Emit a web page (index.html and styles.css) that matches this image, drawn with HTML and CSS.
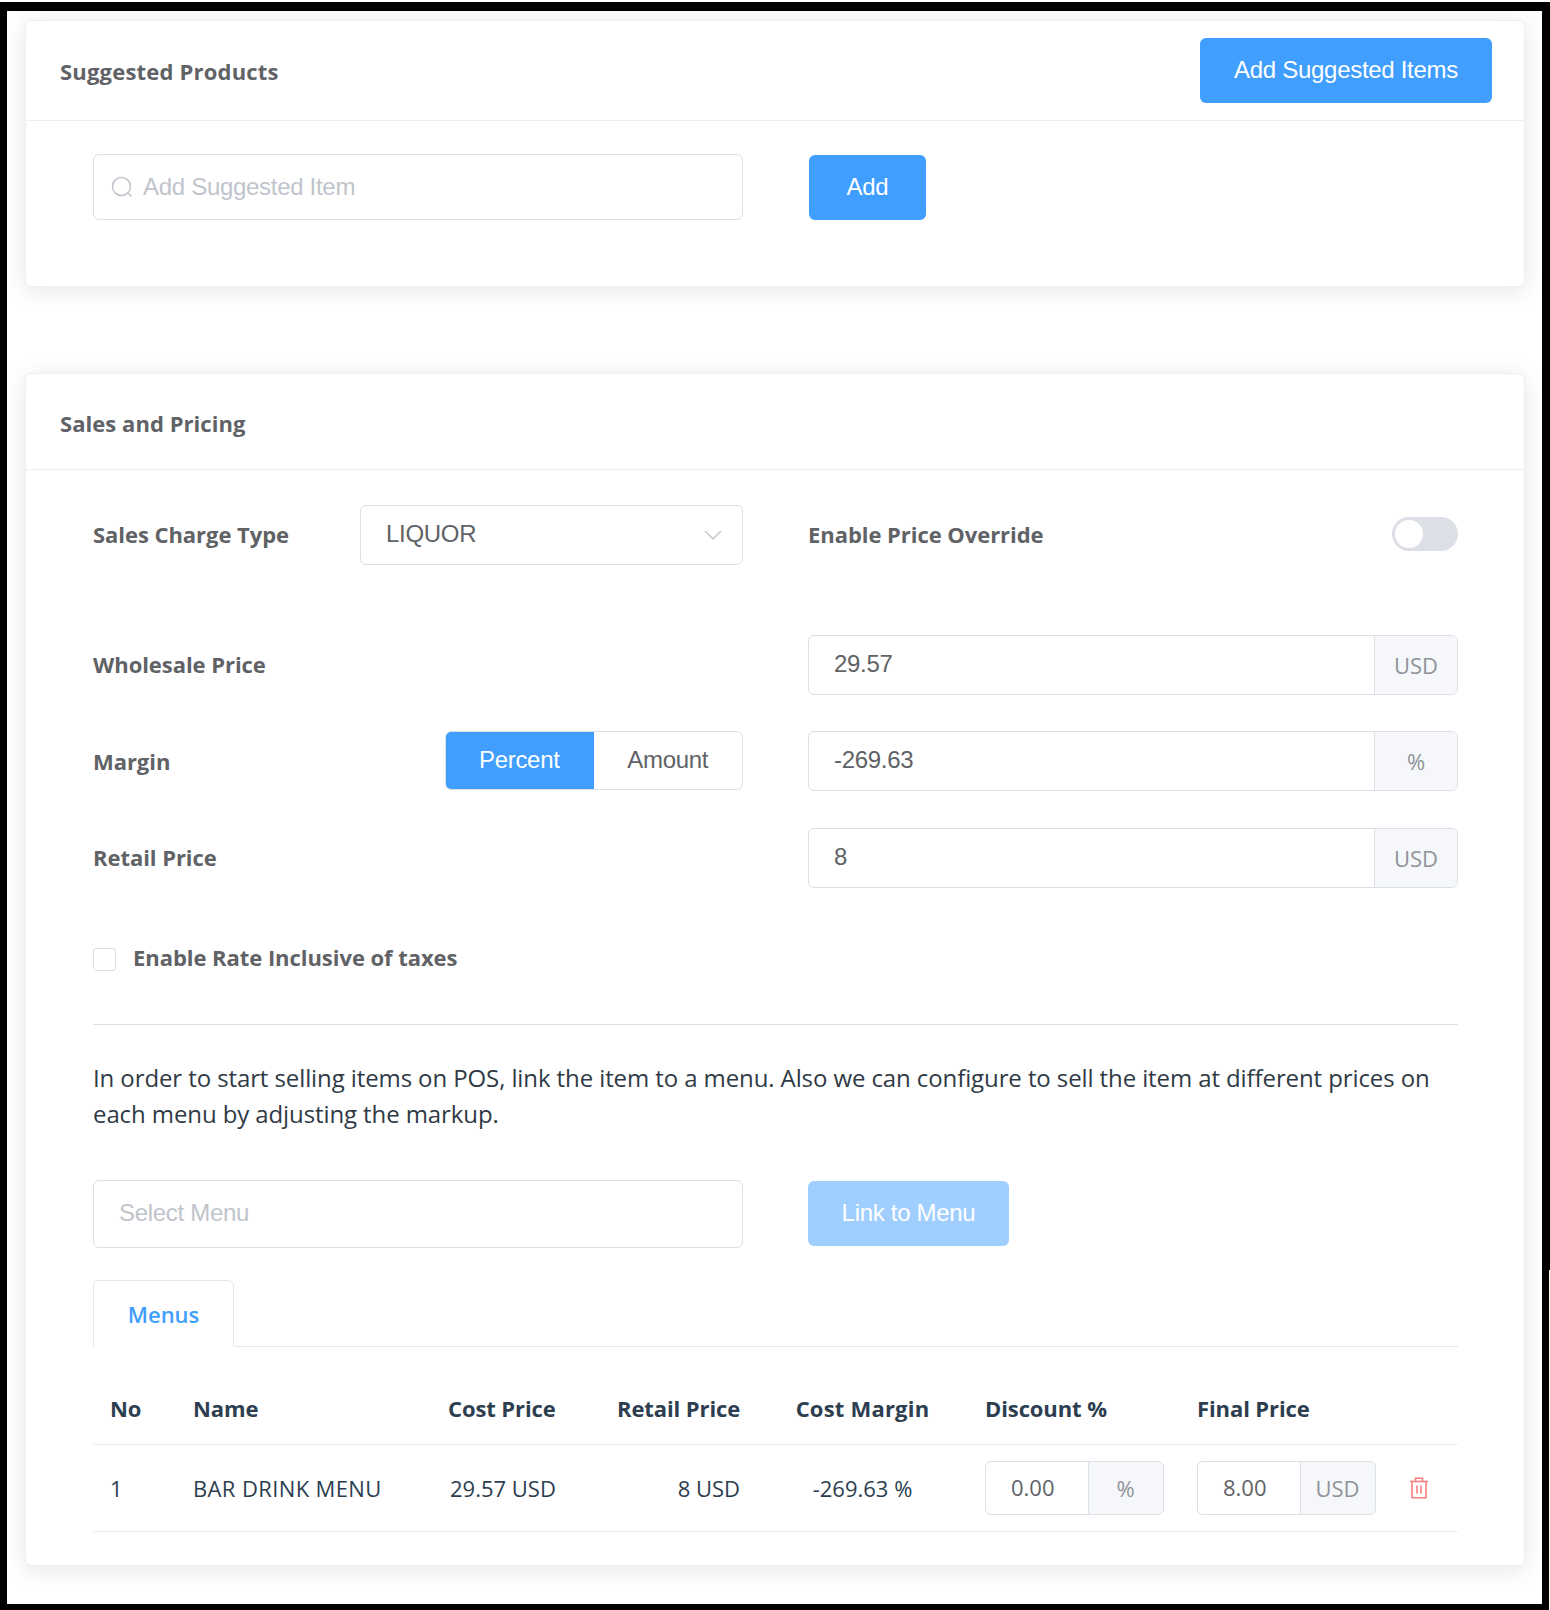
FILE: index.html
```html
<!DOCTYPE html>
<html lang="en">
<head>
    <meta charset="UTF-8">
    <meta name="viewport" content="width=device-width, initial-scale=1.0">
    <title>Sales and Pricing</title>
    <link rel="stylesheet" href="styles.css">
</head>
<body>
    <div class="frame">
        <section class="card card-suggested">
            <div class="card-header">
                <h2>Suggested Products</h2>
                <button class="btn btn-header">Add Suggested Items</button>
            </div>
            <div class="card-body suggested-body">
                <div class="input search-input">
                    <svg class="search-icon" viewBox="0 0 22 22" fill="none" stroke="#c0c4cc" stroke-width="1.5">
                        <circle cx="10.5" cy="10.5" r="9"/>
                        <path d="M17 17l3.5 3.5"/>
                    </svg>
                    <span class="placeholder">Add Suggested Item</span>
                </div>
                <button class="btn btn-add">Add</button>
            </div>
        </section>

        <section class="card card-sales">
            <div class="card-header card-header-plain">
                <h2>Sales and Pricing</h2>
            </div>
            <div class="card-body sales-body">
                <div class="two-col row-charge">
                    <div class="field-left">
                        <label class="label">Sales Charge Type</label>
                        <div class="input select-input">
                            <span>LIQUOR</span>
                            <svg class="chevron" viewBox="0 0 18 10" fill="none" stroke="#c0c4cc" stroke-width="1.4">
                                <path d="M1 1l8 8 8-8"/>
                            </svg>
                        </div>
                    </div>
                    <div class="field-right">
                        <label class="label">Enable Price Override</label>
                        <div class="switch"><div class="switch-knob"></div></div>
                    </div>
                </div>

                <div class="two-col row-price">
                    <label class="label">Wholesale Price</label>
                    <div class="input-group">
                        <div class="group-value">29.57</div>
                        <div class="group-addon">USD</div>
                    </div>
                </div>

                <div class="two-col row-price row-margin">
                    <div class="field-left">
                        <label class="label label-margin">Margin</label>
                        <div class="segmented">
                            <div class="segment segment-active">Percent</div>
                            <div class="segment">Amount</div>
                        </div>
                    </div>
                    <div class="input-group">
                        <div class="group-value">-269.63</div>
                        <div class="group-addon">%</div>
                    </div>
                </div>

                <div class="two-col row-price row-retail">
                    <label class="label">Retail Price</label>
                    <div class="input-group">
                        <div class="group-value">8</div>
                        <div class="group-addon">USD</div>
                    </div>
                </div>

                <div class="check-row">
                    <span class="checkbox"></span>
                    <label class="label">Enable Rate Inclusive of taxes</label>
                </div>

                <div class="divider"></div>

                <p class="help-text">In order to start selling items on POS, link the item to a menu. Also we can configure to sell the item at different prices on each menu by adjusting the markup.</p>

                <div class="two-col row-link">
                    <div class="input menu-input"><span class="placeholder">Select Menu</span></div>
                    <div><button class="btn btn-link">Link to Menu</button></div>
                </div>

                <div class="tabs">
                    <div class="tab">Menus</div>
                </div>

                <table class="menu-table">
                    <colgroup>
                        <col class="col-no">
                        <col class="col-name">
                        <col class="col-cost">
                        <col class="col-retail">
                        <col class="col-margin">
                        <col class="col-discount">
                        <col class="col-final">
                        <col class="col-delete">
                    </colgroup>
                    <thead>
                        <tr>
                            <th>No</th>
                            <th>Name</th>
                            <th>Cost Price</th>
                            <th class="align-right">Retail Price</th>
                            <th class="align-center">Cost Margin</th>
                            <th>Discount %</th>
                            <th>Final Price</th>
                            <th></th>
                        </tr>
                    </thead>
                    <tbody>
                        <tr>
                            <td>1</td>
                            <td class="name-cell">BAR DRINK MENU</td>
                            <td class="cost-cell">29.57 USD</td>
                            <td class="align-right">8 USD</td>
                            <td class="align-center">-269.63 %</td>
                            <td>
                                <div class="input-group input-group-small">
                                    <div class="group-value">0.00</div>
                                    <div class="group-addon">%</div>
                                </div>
                            </td>
                            <td>
                                <div class="input-group input-group-small">
                                    <div class="group-value">8.00</div>
                                    <div class="group-addon">USD</div>
                                </div>
                            </td>
                            <td class="delete-cell">
                                <svg class="trash" viewBox="0 0 20 22" fill="none" stroke="#fb7f7f" stroke-width="1.6">
                                    <path d="M1 4.5h18"/>
                                    <path d="M6.5 4.5V1.2h7v3.3"/>
                                    <path d="M3 4.5v16.3h14V4.5"/>
                                    <path d="M8 8.5v8M12 8.5v8"/>
                                </svg>
                            </td>
                        </tr>
                    </tbody>
                </table>
            </div>
        </section>
        <div class="edge-notch"></div>
    </div>
</body>
</html>
```

FILE: styles.css
```css
* {
    box-sizing: border-box;
}
html, body {
    margin: 0;
    padding: 0;
    background: #ffffff;
}
body {
    padding-top: 2px;
    font-family: "Open Sans", "Liberation Sans", sans-serif;
}
.frame {
    position: relative;
    width: 1550px;
    height: 1608px;
    border: solid #000000;
    border-width: 9px 8px 6px 7px;
    padding: 9px 0 0 18px;
    background: #ffffff;
}
/* the screenshot's black edge loses its last pixel column here */
.edge-notch {
    position: absolute;
    top: 1259px;
    right: -8px;
    width: 1px;
    height: 340px;
    background: #ffffff;
}
.card {
    width: 1500px;
    background: #ffffff;
    border: 1px solid #ebeef5;
    border-radius: 6px;
    box-shadow: 0 4px 24px rgba(0, 0, 0, 0.1);
}
.card-suggested {
    height: 267px;
}
.card-sales {
    height: 1193px;
    margin-top: 86px;
}
.card-header {
    height: 100px;
    padding: 0 32px 0 34px;
    display: flex;
    align-items: center;
    justify-content: space-between;
    border-bottom: 1px solid #ebeef5;
}
.card-header-plain {
    height: 96px;
    padding-top: 3px;
}
.card-header h2 {
    margin: 0;
    font-size: 22px;
    font-weight: 700;
    color: #606266;
    letter-spacing: 0.2px;
}
.card-header-plain h2 {
    letter-spacing: 0.05px;
}
.card-body {
    padding: 33px 66px 0 67px;
}
.suggested-body {
    display: flex;
    gap: 66px;
}
.sales-body {
    padding-top: 35px;
}
.btn {
    border: none;
    border-radius: 6px;
    background: #409eff;
    color: #ffffff;
    font-family: "Liberation Sans", Arial, sans-serif;
    font-size: 24px;
    letter-spacing: -0.3px;
    padding: 0 0 2px;
}
.btn-header {
    width: 292px;
    height: 65px;
}
.btn-add {
    width: 117px;
    height: 65px;
    margin-top: 1px;
}
.btn-link {
    width: 201px;
    height: 65px;
    margin-top: 1px;
    background: #a0cfff;
}
.input {
    height: 66px;
    background: #ffffff;
    border: 1px solid #dcdfe6;
    border-radius: 6px;
    font-family: "Liberation Sans", Arial, sans-serif;
    font-size: 24px;
    letter-spacing: -0.3px;
    color: #606266;
    display: flex;
    align-items: center;
}
.placeholder {
    color: #c0c4cc;
}
.search-input {
    width: 650px;
    padding-left: 17px;
    gap: 10px;
}
.search-icon {
    width: 22px;
    height: 22px;
}
.two-col {
    display: grid;
    grid-template-columns: 650px 650px;
    column-gap: 65px;
}
.field-left, .field-right {
    display: flex;
    align-items: center;
    justify-content: space-between;
}
.label {
    font-size: 22px;
    font-weight: 700;
    color: #606266;
    letter-spacing: -0.05px;
    display: flex;
    align-items: center;
    padding-bottom: 2px;
}
.label-margin {
    padding-bottom: 0;
}
.select-input {
    width: 383px;
    height: 60px;
    padding: 0 20px 0 25px;
    justify-content: space-between;
}
.select-input span {
    margin-top: -3px;
}
.chevron {
    width: 18px;
    height: 10px;
    margin-top: -1px;
}
.switch {
    width: 66px;
    height: 34px;
    border-radius: 17px;
    background: #dcdfe6;
    padding: 3px;
    margin-top: -2px;
}
.switch-knob {
    width: 28px;
    height: 28px;
    border-radius: 50%;
    background: #ffffff;
}
.row-price {
    margin-top: 70px;
}
.row-margin {
    margin-top: 36px;
}
.row-retail {
    margin-top: 37px;
}
.input-group {
    display: flex;
    height: 60px;
    border: 1px solid #dcdfe6;
    border-radius: 6px;
    overflow: hidden;
    font-family: "Liberation Sans", Arial, sans-serif;
    font-size: 24px;
    letter-spacing: -0.3px;
}
.group-value {
    flex: 1;
    padding: 0 0 2px 25px;
    display: flex;
    align-items: center;
    color: #606266;
}
.group-addon {
    width: 83px;
    border-left: 1px solid #dcdfe6;
    background: #f5f7fa;
    color: #909399;
    font-family: "Open Sans", "Liberation Sans", sans-serif;
    font-size: 22px;
    letter-spacing: 0;
    display: flex;
    align-items: center;
    justify-content: center;
}
.segmented {
    width: 298px;
    height: 59px;
    display: flex;
    border: 1px solid #dcdfe6;
    border-radius: 6px;
    overflow: hidden;
    font-family: "Liberation Sans", Arial, sans-serif;
    font-size: 24px;
    letter-spacing: -0.3px;
    color: #606266;
    align-self: flex-start;
}
.segment {
    flex: 1;
    display: flex;
    align-items: center;
    justify-content: center;
    padding-bottom: 1px;
}
.segment-active {
    margin: -1px 0 -1px -1px;
    background: #409eff;
    color: #ffffff;
}
.check-row {
    margin-top: 58px;
    display: flex;
    align-items: center;
    gap: 17px;
    height: 24px;
}
.checkbox {
    width: 23px;
    height: 23px;
    margin-top: 2px;
    border: 1px solid #dcdfe6;
    border-radius: 3px;
}
.divider {
    margin-top: 54px;
    height: 1px;
    background: #dcdfe6;
}
.help-text {
    margin: 35px 0 0;
    font-size: 24px;
    line-height: 36px;
    color: #303a46;
    letter-spacing: -0.1px;
}
.row-link {
    margin-top: 48px;
}
.menu-input {
    height: 68px;
    padding: 0 0 2px 25px;
}
.tabs {
    margin-top: 32px;
    height: 67px;
    border-bottom: 1px solid #e4e7ed;
}
.tab {
    width: 141px;
    height: 67px;
    border: 1px solid #e4e7ed;
    border-bottom: 1px solid #ffffff;
    border-radius: 6px 6px 0 0;
    color: #409eff;
    font-size: 22px;
    font-weight: 600;
    display: flex;
    align-items: center;
    justify-content: center;
    background: #ffffff;
}
.menu-table {
    width: 1365px;
    border-collapse: collapse;
    table-layout: fixed;
    color: #2c3e50;
    font-size: 22px;
}
.col-no { width: 83px; }
.col-name { width: 255px; }
.col-cost { width: 169px; }
.col-retail { width: 157px; }
.col-margin { width: 211px; }
.col-discount { width: 212px; }
.col-final { width: 193px; }
.col-delete { width: 85px; }
.menu-table th {
    height: 97px;
    padding: 25px 17px 0;
    text-align: left;
    font-weight: 700;
    letter-spacing: -0.1px;
    white-space: nowrap;
    border-bottom: 1px solid #ebeef5;
}
.menu-table td {
    height: 87px;
    padding: 0 17px;
    white-space: nowrap;
    border-bottom: 1px solid #ebeef5;
}
.menu-table .align-right {
    text-align: right;
}
.menu-table .align-center {
    text-align: center;
}
.menu-table th.align-center {
    letter-spacing: 0.2px;
}
.menu-table .name-cell {
    letter-spacing: 0.37px;
}
.menu-table .cost-cell {
    padding-left: 19px;
}
.input-group-small {
    width: 178.5px;
    height: 54px;
    font-family: "Open Sans", "Liberation Sans", sans-serif;
    font-size: 22px;
    letter-spacing: 0;
}
.input-group-small .group-value {
    padding-left: 25px;
}
.input-group-small .group-addon {
    width: 75px;
}
.menu-table .delete-cell {
    padding-left: 24px;
    text-align: center;
}
.trash {
    display: block;
    margin: 0 auto;
    width: 20px;
    height: 22px;
}
```
